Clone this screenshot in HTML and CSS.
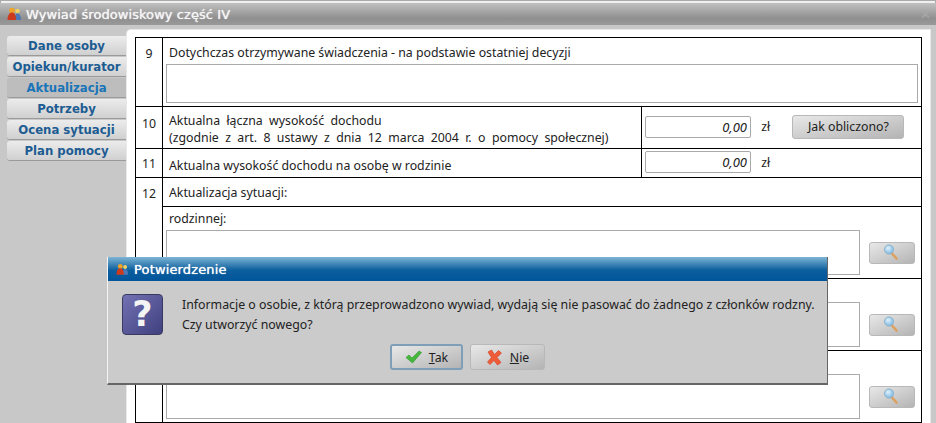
FILE: index.html
```html
<!DOCTYPE html>
<html lang="pl">
<head>
    <meta charset="UTF-8">
    <title>Wywiad środowiskowy część IV</title>
    <link rel="stylesheet" href="styles.css">
</head>
<body>

<div class="window">
    <div class="titlebar">
        <svg class="app-icon" width="15" height="14" viewBox="0 0 15 14"><use href="#people"/></svg>
        <span>Wywiad środowiskowy część IV</span>
        <span class="close-x">✕</span>
    </div>

    <div class="content">
        <div class="sidebar">
            <div class="tab">Dane osoby</div>
            <div class="tab">Opiekun/kurator</div>
            <div class="tab tab-active">Aktualizacja</div>
            <div class="tab">Potrzeby</div>
            <div class="tab">Ocena sytuacji</div>
            <div class="tab">Plan pomocy</div>
        </div>

        <div class="panel">
            <table class="form-table">
                <colgroup>
                    <col class="col-num">
                    <col class="col-main">
                    <col class="col-side">
                </colgroup>
                <tr class="row-9">
                    <td class="num">9</td>
                    <td colspan="2" class="cell">
                        <div class="label">Dotychczas otrzymywane świadczenia - na podstawie ostatniej decyzji</div>
                        <div class="field field-wide"></div>
                    </td>
                </tr>
                <tr class="row-10">
                    <td class="num num-10">10</td>
                    <td class="cell cell-mid">
                        <div class="label label-spaced">Aktualna łączna wysokość dochodu<br>(zgodnie z art. 8 ustawy z dnia 12 marca 2004 r. o pomocy społecznej)</div>
                    </td>
                    <td class="side">
                        <div class="amount">0,00</div>
                        <span class="unit">zł</span>
                        <button class="btn btn-calc">Jak obliczono?</button>
                    </td>
                </tr>
                <tr class="row-11">
                    <td class="num num-11">11</td>
                    <td class="cell cell-mid">
                        <div class="label">Aktualna wysokość dochodu na osobę w rodzinie</div>
                    </td>
                    <td class="side">
                        <div class="amount">0,00</div>
                        <span class="unit">zł</span>
                    </td>
                </tr>
                <tr class="row-12">
                    <td class="num" rowspan="4">12</td>
                    <td colspan="2" class="cell cell-mid">
                        <div class="label">Aktualizacja sytuacji:</div>
                    </td>
                </tr>
                <tr class="row-text">
                    <td colspan="2" class="cell">
                        <div class="label">rodzinnej:</div>
                        <div class="text-row">
                            <div class="field"></div>
                            <button class="btn btn-search"><svg width="20" height="20" viewBox="0 0 20 20"><use href="#lens"/></svg></button>
                        </div>
                    </td>
                </tr>
                <tr class="row-text">
                    <td colspan="2" class="cell">
                        <div class="label"></div>
                        <div class="text-row">
                            <div class="field"></div>
                            <button class="btn btn-search"><svg width="20" height="20" viewBox="0 0 20 20"><use href="#lens"/></svg></button>
                        </div>
                    </td>
                </tr>
                <tr class="row-text">
                    <td colspan="2" class="cell">
                        <div class="label"></div>
                        <div class="text-row">
                            <div class="field"></div>
                            <button class="btn btn-search"><svg width="20" height="20" viewBox="0 0 20 20"><use href="#lens"/></svg></button>
                        </div>
                    </td>
                </tr>
            </table>
        </div>
    </div>

    <!-- okno potwierdzenia -->
    <div class="dialog">
        <div class="dialog-title">
            <svg class="app-icon" width="13" height="13" viewBox="0 0 15 14"><use href="#people"/></svg>
            <span>Potwierdzenie</span>
        </div>
        <div class="dialog-body">
            <div class="question">?</div>
            <div class="dialog-text">Informacje o osobie, z którą przeprowadzono wywiad, wydają się nie pasować do żadnego z członków rodzny.<br>Czy utworzyć nowego?</div>
        </div>
        <div class="dialog-buttons">
            <button class="btn btn-dialog btn-default">
                <svg width="17" height="14" viewBox="0 0 17 14"><path d="M1 7.500l3-2.500 3 3L14 1l2.500 1.500L7.500 13z" fill="#45b83c" stroke="#2f9430" stroke-width=".6" stroke-linejoin="round"/></svg>
                <span><u>T</u>ak</span>
            </button>
            <button class="btn btn-dialog">
                <svg width="17" height="17" viewBox="0 0 17 17"><path d="M2 3l3.500-2 3 4.500L12.500 1.500 15.500 4l-4.500 4.500 4 5-3.500 2.500-3.500-4.500L4 15.500 1.500 13l4-4.500z" fill="#ef5c38" stroke="#d4482a" stroke-width=".7" stroke-linejoin="round"/></svg>
                <span><u>N</u>ie</span>
            </button>
        </div>
    </div>
</div>

<svg class="defs" width="0" height="0">
    <defs>
        <radialGradient id="glass" cx=".4" cy=".35" r=".7">
            <stop offset="0" stop-color="#dff1fb"/>
            <stop offset="1" stop-color="#78b6e0"/>
        </radialGradient>
        <g id="people">
            <circle cx="10.500" cy="4" r="2.300" fill="#f0d060"/>
            <path d="M7.500 13c0-4 1-6.500 3-6.500s3.500 2.500 3.500 6.500z" fill="#4a78b8"/>
            <circle cx="5" cy="3.500" r="2.800" fill="#eea428"/>
            <path d="M.500 13c0-5 2-7.500 4.500-7.500s4 2.500 4 7.500z" fill="#cc3a1e"/>
        </g>
        <g id="lens">
            <path d="M10 10.500l4.500 5" stroke="#dca060" stroke-width="2.600" stroke-linecap="round"/>
            <circle cx="7" cy="6.500" r="4.500" fill="url(#glass)" stroke="#8ab0cc"/>
        </g>
    </defs>
</svg>

</body>
</html>
```

FILE: styles.css
```css
/* ogólne */
html, body {
    margin: 0;
    padding: 0;
}

body {
    font-family: "DejaVu Sans", sans-serif;
    font-size: 12px;
    color: #222;
}

.defs {
    position: absolute;
}

.window {
    position: relative;
    width: 936px;
    height: 423px;
    overflow: hidden;
    background-color: #c8c8c8;
}

/* pasek tytułu */
.titlebar {
    display: flex;
    align-items: center;
    gap: 4px;
    height: 22px;
    margin-top: 3px;
    padding-left: 7px;
    background: linear-gradient(#c0c0c0, #8f8f8f 70%, #999);
    color: #f4f4f4;
    font-size: 13px;
    letter-spacing: .07px;
    text-shadow: 0 0 1px #fff;
    box-shadow: 0 -3px 0 -1px #f0f0f0, 0 -3px 0 #aaa;
}

.close-x {
    margin-left: auto;
    margin-right: 5px;
    color: #a8a8a8;
    font-size: 13px;
    text-shadow: none;
}

.content {
    display: flex;
    height: 398px;
}

/* zakładki */
.sidebar {
    display: flex;
    flex-direction: column;
    gap: 1px;
    width: 119px;
    margin-left: 7px;
    padding-top: 11px;
}

.tab {
    height: 20px;
    line-height: 20px;
    text-align: center;
    font-size: 11.7px;
    font-weight: bold;
    color: #1d5c92;
    background: linear-gradient(#ececec, #d0d0d0);
    border-radius: 3px 0 0 3px;
    border-bottom: 1px solid #9a9a9a;
    box-sizing: border-box;
}

.tab-active {
    color: #1a74b8;
    background: #bdbdbd;
}

/* panel z formularzem */
.panel {
    width: 803px;
    height: 393px;
    margin: 5px 0 0 1px;
    padding: 7px 0 0 8px;
    box-sizing: border-box;
    background-color: #fff;
    border-top-left-radius: 4px;
    box-shadow: 0 0 0 1px #e8e8e8;
}

.form-table {
    width: 787px;
    table-layout: fixed;
    border-collapse: collapse;
    font-family: "Noto Sans", sans-serif;
    font-size: 12.3px;
}

.col-num { width: 27px; }
.col-side { width: 280px; }

.form-table td {
    border: 1px solid #000;
    padding: 0;
    vertical-align: top;
}

.row-9 { height: 69px; }
.row-10 { height: 42px; }
.row-11 { height: 29px; }
.row-12 { height: 29px; }
.row-text { height: 72px; }

.form-table .num {
    text-align: center;
    padding-top: 7px;
}

.form-table .num-10 {
    padding-top: 8px;
}

.form-table .num-11 {
    padding-top: 6px;
}

.form-table .cell {
    padding: 7px 3px 0 3px;
}

.row-text .cell {
    padding-top: 4px;
}

.form-table .cell-mid {
    vertical-align: middle;
    padding-top: 3px;
}

.row-11 .cell-mid {
    padding-top: 5px;
}

.row-12 .cell-mid {
    padding-top: 1px;
}

.label {
    min-height: 16px;
    line-height: 16px;
    padding-left: 3px;
}

.label-spaced {
    line-height: 17px;
    word-spacing: 3.2px;
}

.field {
    flex: 1;
    height: 45px;
    box-sizing: border-box;
    background-color: #fff;
    border: 1px solid #aaa;
}

.field-wide {
    height: 39px;
    margin-top: 3px;
}

.text-row {
    display: flex;
    align-items: center;
    gap: 9px;
    margin-top: 3px;
    padding-right: 3px;
}

/* kwoty */
.form-table .side {
    vertical-align: middle;
    padding: 0 0 2px 3px;
}

.side {
    white-space: nowrap;
}

.amount {
    display: inline-block;
    width: 106px;
    height: 22px;
    line-height: 20px;
    padding-right: 3px;
    box-sizing: border-box;
    vertical-align: middle;
    text-align: right;
    font-style: italic;
    font-size: 13px;
    border: 1px solid #aaa;
    border-radius: 2px;
}

.unit {
    margin-left: 7px;
    vertical-align: middle;
}

/* przyciski */
.btn {
    font-family: "Noto Sans", sans-serif;
    font-size: 12.3px;
    color: #222;
    padding: 0;
    border: 1px solid #b8b8b8;
    border-radius: 3px;
    background: linear-gradient(to bottom right, #e8e8e8, #b4b4b4);
    cursor: pointer;
}

.btn-calc {
    width: 112px;
    height: 24px;
    margin-left: 19px;
    vertical-align: middle;
}

.btn-search {
    display: flex;
    align-items: center;
    justify-content: center;
    flex: none;
    width: 46px;
    height: 22px;
}

/* okno potwierdzenia */
.dialog {
    position: absolute;
    left: 107px;
    top: 257px;
    width: 721px;
    height: 128px;
    box-sizing: border-box;
    background-color: #cbcbcb;
    border-left: 1px solid #f4f4f4;
    border-right: 1px solid #666;
    border-bottom: 2px solid #666;
}

.dialog-title {
    display: flex;
    align-items: center;
    gap: 5px;
    height: 24px;
    padding-left: 8px;
    background: linear-gradient(#7fb4d4, #0b5f9e 55%, #00549a);
    color: #fff;
    font-size: 13px;
    letter-spacing: .15px;
    text-shadow: 0 0 1px #fff;
}

.dialog-body {
    display: flex;
    align-items: flex-start;
    gap: 19px;
    padding: 13px 0 0 14px;
}

.question {
    width: 41px;
    height: 41px;
    flex: none;
    box-sizing: border-box;
    text-align: center;
    font-family: "DejaVu Sans", sans-serif;
    font-weight: bold;
    font-size: 35px;
    line-height: 38px;
    color: #f4f4f4;
    background: linear-gradient(135deg, #7272b4, #40407f);
    border: 1px solid #3a3a60;
    border-radius: 4px;
}

.dialog-text {
    font-family: "Noto Sans", sans-serif;
    font-size: 12.35px;
    line-height: 20px;
    padding-top: 1px;
}

.dialog-buttons {
    display: flex;
    gap: 7px;
    margin: 9px 0 0 282px;
}

.btn-dialog {
    display: flex;
    align-items: center;
    justify-content: center;
    gap: 7px;
    width: 75px;
    height: 26px;
}

.btn-default {
    width: 73px;
    border: 2px solid #7f9fb8;
}
```
